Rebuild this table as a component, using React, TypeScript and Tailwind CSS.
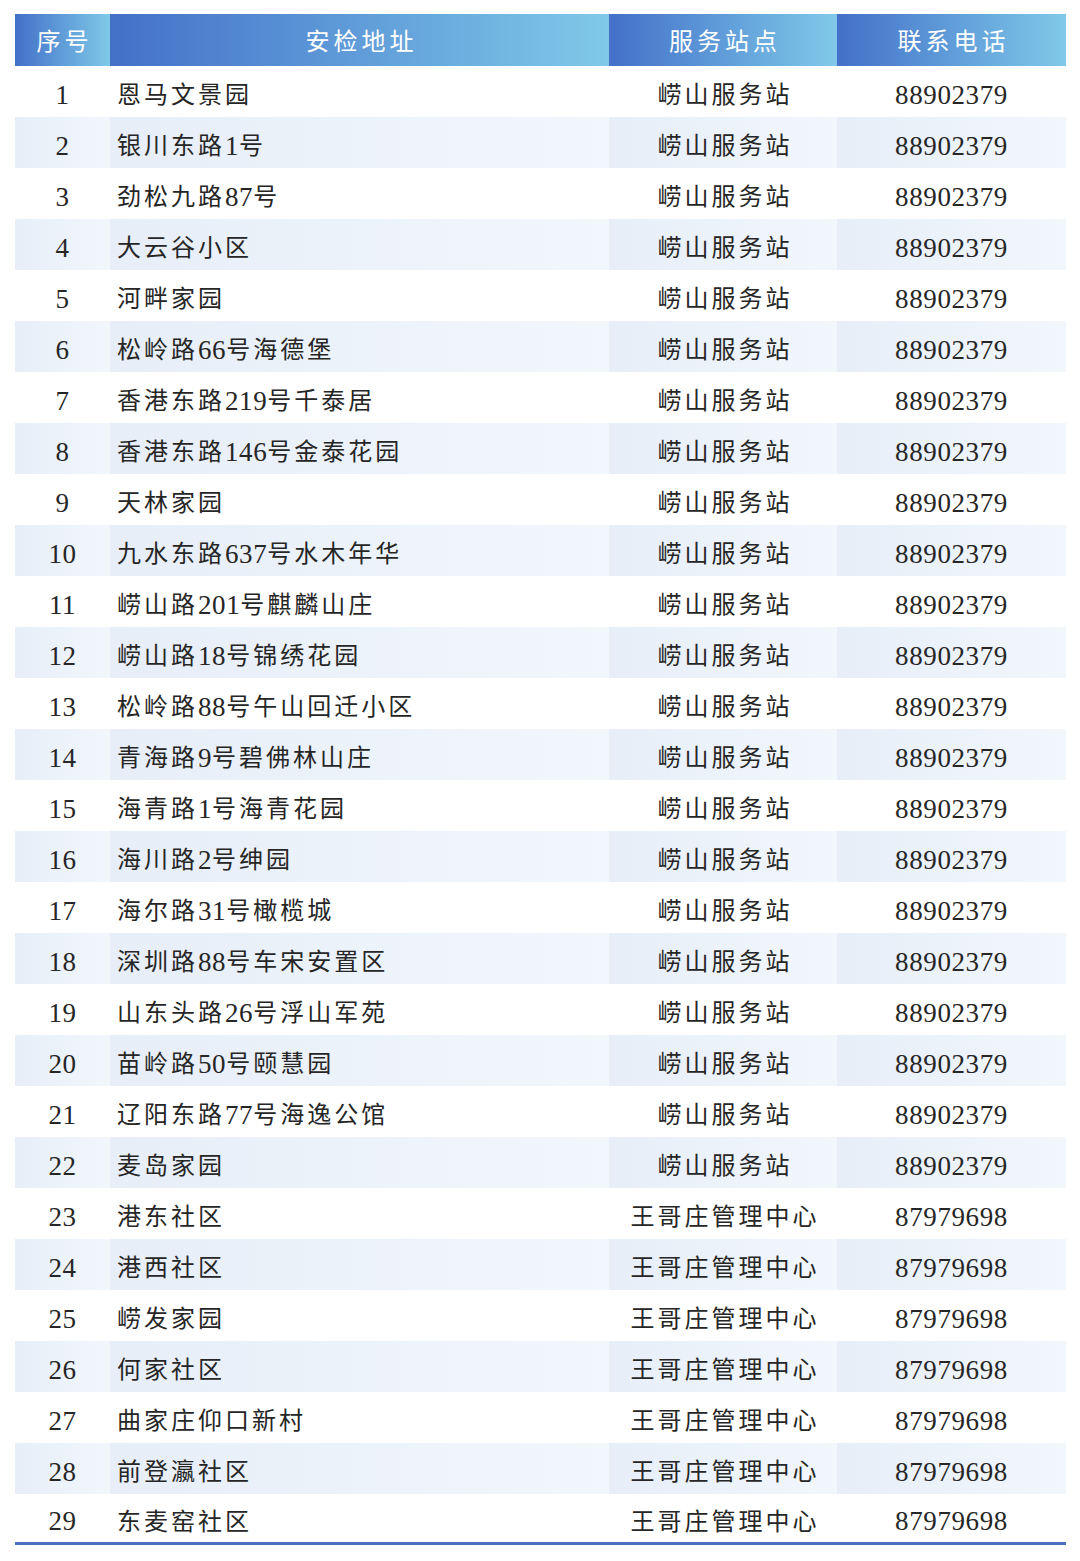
const ROWS: [string, string, string][] = [
  ['恩马文景园', '崂山服务站', '88902379'],
  ['银川东路1号', '崂山服务站', '88902379'],
  ['劲松九路87号', '崂山服务站', '88902379'],
  ['大云谷小区', '崂山服务站', '88902379'],
  ['河畔家园', '崂山服务站', '88902379'],
  ['松岭路66号海德堡', '崂山服务站', '88902379'],
  ['香港东路219号千泰居', '崂山服务站', '88902379'],
  ['香港东路146号金泰花园', '崂山服务站', '88902379'],
  ['天林家园', '崂山服务站', '88902379'],
  ['九水东路637号水木年华', '崂山服务站', '88902379'],
  ['崂山路201号麒麟山庄', '崂山服务站', '88902379'],
  ['崂山路18号锦绣花园', '崂山服务站', '88902379'],
  ['松岭路88号午山回迁小区', '崂山服务站', '88902379'],
  ['青海路9号碧佛林山庄', '崂山服务站', '88902379'],
  ['海青路1号海青花园', '崂山服务站', '88902379'],
  ['海川路2号绅园', '崂山服务站', '88902379'],
  ['海尔路31号橄榄城', '崂山服务站', '88902379'],
  ['深圳路88号车宋安置区', '崂山服务站', '88902379'],
  ['山东头路26号浮山军苑', '崂山服务站', '88902379'],
  ['苗岭路50号颐慧园', '崂山服务站', '88902379'],
  ['辽阳东路77号海逸公馆', '崂山服务站', '88902379'],
  ['麦岛家园', '崂山服务站', '88902379'],
  ['港东社区', '王哥庄管理中心', '87979698'],
  ['港西社区', '王哥庄管理中心', '87979698'],
  ['崂发家园', '王哥庄管理中心', '87979698'],
  ['何家社区', '王哥庄管理中心', '87979698'],
  ['曲家庄仰口新村', '王哥庄管理中心', '87979698'],
  ['前登瀛社区', '王哥庄管理中心', '87979698'],
  ['东麦窑社区', '王哥庄管理中心', '87979698'],
]

const HEADERS = ['序号', '安检地址', '服务站点', '联系电话']

// digits in the source are a taller serif than the CJK face, so size them up separately
function Mixed({ text }: { text: string }) {
  const parts = text.split(/(\d+)/).filter(Boolean)
  return (
    <>
      {parts.map((p, i) =>
        /^\d+$/.test(p) ? (
          <span key={i} className="text-[27px] tracking-[0.6px]">
            {p}
          </span>
        ) : (
          <span key={i} className="tracking-[3px]">
            {p}
          </span>
        ),
      )}
    </>
  )
}

export default function App() {
  return (
    <div
      className="min-h-[1561px] w-[1080px] bg-white pl-[15px] pt-[14px]"
      style={{ fontFamily: '"Liberation Serif", "Noto Sans CJK SC", serif' }}
    >
      <div className="grid w-[1051px] grid-cols-[95px_499px_228px_229px]">
        {HEADERS.map((h) => (
          <div
            key={h}
            className="flex h-[52px] items-center justify-center bg-gradient-to-r from-[#4470c8] to-[#80c9e8] pt-[4px] pl-[4px] text-[24px] tracking-[4px] text-white"
          >
            {h}
          </div>
        ))}
        {ROWS.map(([addr, station, phone], i) => {
          const shaded = i % 2 === 1
          const last = i === ROWS.length - 1
          const cell = `flex h-[51px] items-center pt-[7px] text-[24px] leading-none text-[#262626] ${
            shaded ? 'bg-gradient-to-r from-[#e7eef8] to-[#f2f7fc]' : 'bg-white'
          } ${last ? 'border-b-[3px] border-[#4a70c4]' : ''}`
          return [
            <div key={`n${i}`} className={`${cell} justify-center`}>
              <Mixed text={String(i + 1)} />
            </div>,
            <div key={`a${i}`} className={`${cell} pl-[7px]`}>
              <Mixed text={addr} />
            </div>,
            <div key={`s${i}`} className={`${cell} justify-center pl-[4px]`}>
              <Mixed text={station} />
            </div>,
            <div key={`p${i}`} className={`${cell} justify-center`}>
              <Mixed text={phone} />
            </div>,
          ]
        })}
      </div>
    </div>
  )
}
